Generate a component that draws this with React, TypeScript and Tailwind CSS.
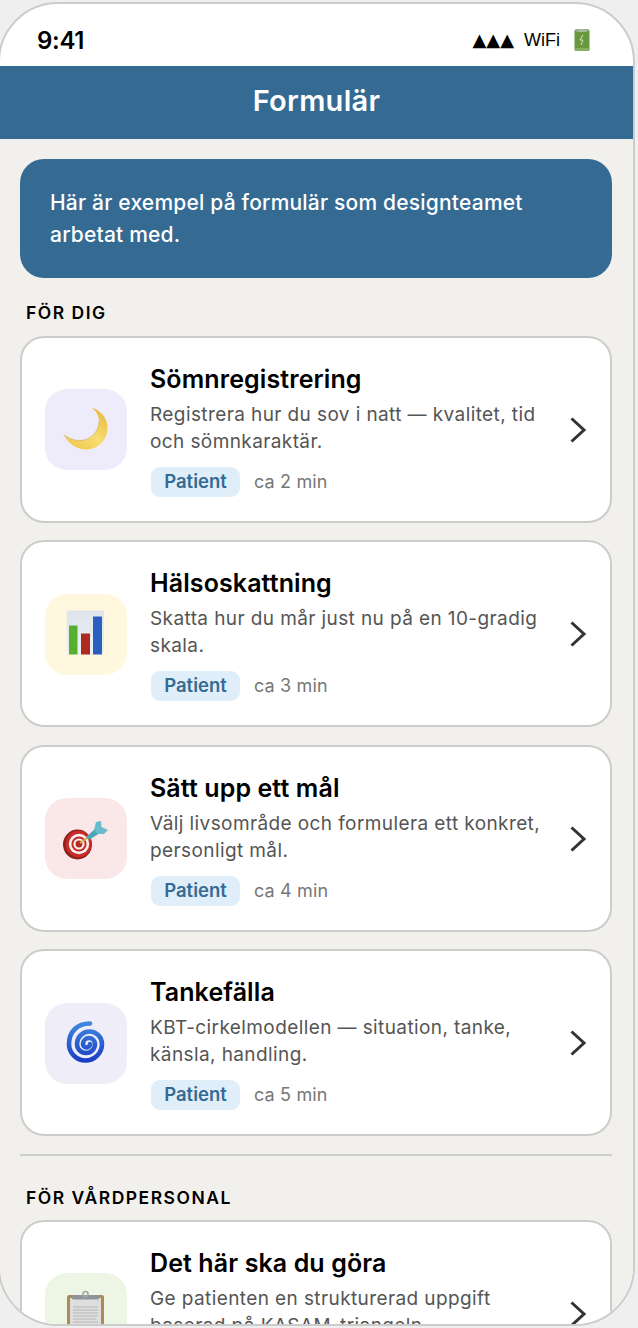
const font = "[font-family:Inter,'Liberation_Sans',sans-serif]";

function Moon() {
  return (
    <svg width="48" height="48" viewBox="0 0 48 48">
      <defs>
        <linearGradient id="moon" x1="0.9" y1="0.1" x2="0.2" y2="0.9">
          <stop offset="0" stopColor="#e8bc42" />
          <stop offset="0.55" stopColor="#f7de70" />
          <stop offset="1" stopColor="#efcb52" />
        </linearGradient>
      </defs>
      <path
        d="M30 1.5C40 5 45.5 13 45.5 22C45.5 34 36 43.5 24 43.5C14 43.5 6 37 1.5 28.5C7 33 13 34.5 18 34.5C27 34.5 37 27 37 15C37 10 34 5 30 1.5Z"
        fill="url(#moon)"
      />
      <path d="M1.5 28.5C7 33 13 34.5 18 34.5C27 34.5 37 27 37 15" fill="none" stroke="#c9a15a" strokeWidth="0.8" opacity="0.7" />
    </svg>
  );
}

function Chart() {
  return (
    <svg width="48" height="48" viewBox="0 0 48 48">
      <defs>
        <linearGradient id="panel" x1="0" y1="0" x2="0" y2="1">
          <stop offset="0" stopColor="#dfe4ec" />
          <stop offset="1" stopColor="#eef1f5" />
        </linearGradient>
      </defs>
      <rect x="4.7" y="0.5" width="37.3" height="44" fill="url(#panel)" />
      <rect x="7" y="15.5" width="8.5" height="29" fill="#55b030" />
      <rect x="19" y="23.5" width="9" height="21" fill="#ad2a1e" />
      <rect x="31" y="6.5" width="9" height="38" fill="#2a5fc0" />
    </svg>
  );
}

function Dart() {
  return (
    <svg width="48" height="48" viewBox="0 0 48 48">
      <ellipse cx="15.5" cy="29.5" rx="14.5" ry="15" fill="#8e1f1c" />
      <ellipse cx="16.5" cy="29" rx="13" ry="13.6" fill="#c62c28" />
      <circle cx="17" cy="29" r="10.2" fill="#fbeeee" />
      <circle cx="17" cy="29" r="7.6" fill="#c22b27" />
      <circle cx="17" cy="29" r="5.6" fill="#fbeeee" />
      <circle cx="17" cy="29" r="3.4" fill="#b52a24" />
      <path d="M18 28L26 22.5" stroke="#d8b23c" strokeWidth="2" />
      <path d="M24 22L34 13L38 18L27 25Z" fill="#4fa6b8" />
      <path d="M32 15L34 7L39 6L39.5 12L46 15L42 19L36 19Z" fill="#68bccb" />
    </svg>
  );
}

function Spiral() {
  return (
    <svg width="48" height="48" viewBox="0 0 48 48">
      <defs>
        <linearGradient id="spiral" x1="0" y1="0" x2="0" y2="1">
          <stop offset="0" stopColor="#3f86e0" />
          <stop offset="1" stopColor="#1b3fc4" />
        </linearGradient>
      </defs>
      <path
        d="M28 4.5C15 4.5 7 13 7 25A16.5 16.5 0 0 0 40 25A12.5 12.5 0 0 0 15 25A9 9 0 0 0 33 25A6 6 0 0 0 21 25A3.5 3.5 0 0 0 28 25"
        fill="none"
        stroke="url(#spiral)"
        strokeWidth="4.6"
        strokeLinecap="round"
      />
    </svg>
  );
}

function Clipboard() {
  return (
    <svg width="48" height="48" viewBox="0 0 48 48">
      <rect x="5" y="5" width="37" height="44" rx="2" fill="#b08a52" />
      <rect x="8" y="8" width="31" height="41" fill="#dedede" />
      <path d="M11 17H36M11 20H36M11 23H36M11 26H36M11 29H34M11 32H36M11 35H34" stroke="#c4c4c4" strokeWidth="1.5" />
      <rect x="10" y="5" width="27" height="4.5" rx="1.5" fill="#8f9499" />
      <circle cx="23.5" cy="4" r="2.6" fill="none" stroke="#a2a7ac" strokeWidth="1.5" />
    </svg>
  );
}

function Battery() {
  return (
    <svg width="18" height="24" viewBox="0 0 18 24">
      <rect x="1.5" y="1" width="15" height="22" rx="2.5" fill="#69983f" />
      <ellipse cx="9" cy="2.5" rx="6.5" ry="1.6" fill="#a7b8a0" />
      <path d="M10 7L7 12H10L8 17" fill="none" stroke="#cfe0bb" strokeWidth="1" />
      <rect x="1.5" y="20" width="15" height="3" rx="1.5" fill="#86b05e" />
    </svg>
  );
}

function Chevron() {
  return (
    <svg width="20" height="28" viewBox="0 0 20 28" className="shrink-0">
      <path d="M3.5 2.5L16 14L3.5 25.5" fill="none" stroke="#333333" strokeWidth="3" />
    </svg>
  );
}

type Item = {
  title: string;
  desc: string[];
  time?: string;
  tone: string;
  icon: React.ReactNode;
};

const forYou: Item[] = [
  {
    title: "Sömnregistrering",
    desc: ["Registrera hur du sov i natt — kvalitet, tid", "och sömnkaraktär."],
    time: "ca 2 min",
    tone: "bg-[#eeecfb]",
    icon: <Moon />,
  },
  {
    title: "Hälsoskattning",
    desc: ["Skatta hur du mår just nu på en 10-gradig", "skala."],
    time: "ca 3 min",
    tone: "bg-[#fff7de]",
    icon: <Chart />,
  },
  {
    title: "Sätt upp ett mål",
    desc: ["Välj livsområde och formulera ett konkret,", "personligt mål."],
    time: "ca 4 min",
    tone: "bg-[#fae8e8]",
    icon: <Dart />,
  },
  {
    title: "Tankefälla",
    desc: ["KBT-cirkelmodellen — situation, tanke,", "känsla, handling."],
    time: "ca 5 min",
    tone: "bg-[#efeef8]",
    icon: <Spiral />,
  },
];

function Card({ item }: { item: Item }) {
  return (
    <div className="flex items-center rounded-[24px] border-2 border-[#cccccc] bg-white pl-[23px] pr-[22px] pt-[25px] pb-[24px]">
      <div className={`flex h-[81px] w-[82px] shrink-0 items-center justify-center rounded-[22px] ${item.tone}`}>
        {item.icon}
      </div>
      <div className="ml-[24px] min-w-0 flex-1">
        <div className="-ml-px h-[30px] whitespace-nowrap text-[25px] leading-[32px] font-semibold tracking-[0.1px] text-black">
          {item.title}
        </div>
        <div className="-ml-px mt-[7px] pt-px text-[19px] leading-[27px] tracking-[0.4px] text-[#555555]">
          {item.desc.map((line) => (
            <div key={line} className="whitespace-nowrap">{line}</div>
          ))}
        </div>
        <div className="mt-[12px] flex h-[30px] items-center">
          <span className="flex h-[30px] w-[89px] items-center justify-center rounded-[9px] bg-[#e0eef9] text-[18.5px] font-semibold text-[#356a93]">
            Patient
          </span>
          <span className="-mt-px ml-[14px] text-[18px] tracking-[0.15px] text-[#777777]">{item.time}</span>
        </div>
      </div>
      <Chevron />
    </div>
  );
}

export default function App() {
  return (
    <div className={`h-[1328px] w-[638px] overflow-hidden bg-[#efefef] pt-[2px] ${font}`}>
      <div className="-ml-[2px] flex h-[1324px] w-[637px] flex-col overflow-hidden rounded-[60px] border-2 border-[#cccccc] bg-white">
        <div className="flex h-[62px] shrink-0 items-center justify-between pl-[37px] pr-[42px] pt-[10px]">
          <span className="mt-[2px] text-[24px] font-semibold tracking-[-0.3px] text-black">9:41</span>
          <div className="flex items-center">
            <span className="font-['DejaVu_Sans'] text-[18px] leading-[24px] text-black">▲▲▲</span>
            <span className="ml-[10px] font-['Liberation_Sans'] text-[18px] text-black">WiFi</span>
            <span className="ml-[13px] flex"><Battery /></span>
          </div>
        </div>
        <div className="flex h-[73px] shrink-0 items-center justify-center bg-[#356a93] pb-[3px] text-[29px] font-semibold tracking-[0.3px] text-white">
          Formulär
        </div>
        <div className="flex-1 overflow-hidden bg-[#f2f0ed] pl-[20px] pr-[21px] pt-[20px]">
          <div className="h-[119px] rounded-[24px] bg-[#356a93] px-[30px] pt-[28px] text-[21px] leading-[32px] font-medium tracking-[0.2px] text-white">
            <div className="whitespace-nowrap">Här är exempel på formulär som designteamet</div>
            <div>arbetat med.</div>
          </div>
          <div className="ml-[6px] mt-[24px] h-[21px] text-[17.5px] leading-[22px] font-semibold tracking-[1.5px] text-black">
            FÖR DIG
          </div>
          <div className="mt-[12.5px] flex flex-col gap-[17.5px]">
            {forYou.map((item) => (
              <Card key={item.title} item={item} />
            ))}
          </div>
          <div className="mt-[17.5px] h-[2px] bg-[#cfcfcb]" />
          <div className="ml-[6px] mt-[31px] h-[21px] text-[17.5px] leading-[22px] font-semibold tracking-[1.5px] text-black">
            FÖR VÅRDPERSONAL
          </div>
          <div className="mt-[12px]">
            <Card
              item={{
                title: "Det här ska du göra",
                desc: ["Ge patienten en strukturerad uppgift", "baserad på KASAM-triangeln."],
                time: "ca 2 min",
                tone: "bg-[#edf6e4]",
                icon: <Clipboard />,
              }}
            />
          </div>
        </div>
      </div>
    </div>
  );
}
